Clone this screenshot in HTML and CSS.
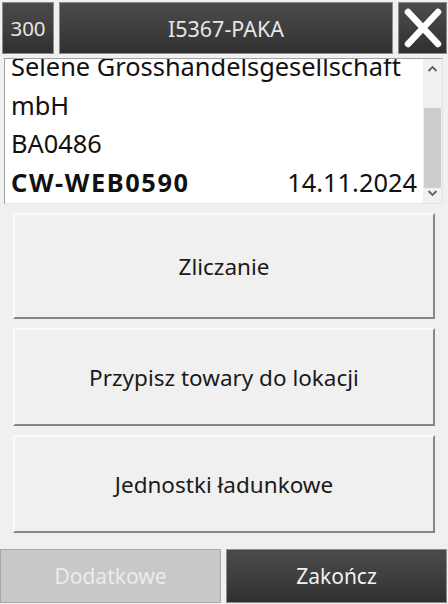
FILE: index.html
```html
<!DOCTYPE html>
<html lang="pl">
<head>
  <meta charset="UTF-8">
  <meta name="viewport" content="width=device-width, initial-scale=1.0">
  <title>I5367-PAKA</title>
  <link rel="stylesheet" href="styles.css">
</head>
<body>
  <div class="screen">
    <div class="top-bar">
      <div class="dark-box counter">300</div>
      <div class="dark-box title">I5367-PAKA</div>
      <button class="dark-box close-button" aria-label="Zamknij">
        <svg width="40" height="42" viewBox="0 0 40 42">
          <path d="M5 5 L35 37 M35 5 L5 37" stroke="#fff" stroke-width="6.5" stroke-linecap="round" fill="none"/>
        </svg>
      </button>
    </div>

    <div class="doc-list">
      <div class="doc-lines">
        <div class="doc-line">Selene Grosshandelsgesellschaft</div>
        <div class="doc-line">mbH</div>
        <div class="doc-line">BA0486</div>
        <div class="doc-line split">
          <strong>CW-WEB0590</strong>
          <span>14.11.2024</span>
        </div>
      </div>
      <div class="scrollbar">
        <svg class="arrow" width="19" height="18" viewBox="0 0 19 18">
          <path d="M5.5 12 L9.5 8 L13.5 12" stroke="#606060" stroke-width="1.8" fill="none"/>
        </svg>
        <div class="track"><div class="thumb"></div></div>
        <svg class="arrow" width="19" height="14" viewBox="0 0 19 14">
          <path d="M5.5 2 L9.5 6 L13.5 2" stroke="#606060" stroke-width="1.8" fill="none"/>
        </svg>
      </div>
    </div>

    <div class="actions">
      <button class="action-button tall">Zliczanie</button>
      <button class="action-button">Przypisz towary do lokacji</button>
      <button class="action-button">Jednostki ładunkowe</button>
    </div>

    <div class="bottom-bar">
      <button class="bottom-button disabled" disabled>Dodatkowe</button>
      <button class="bottom-button dark">Zakończ</button>
    </div>
  </div>
</body>
</html>
```

FILE: styles.css
```css
* {
  margin: 0;
  padding: 0;
  box-sizing: border-box;
}

body {
  font-family: 'Noto Sans', 'Open Sans', sans-serif;
  background: #f0f0f0;
  color: #111;
  width: 448px;
  height: 604px;
  overflow: hidden;
}

.screen {
  display: flex;
  flex-direction: column;
  height: 100%;
}

button {
  font-family: inherit;
  cursor: pointer;
}

/* top bar */
.top-bar {
  display: flex;
  gap: 5px;
  padding: 2px 1px 0 2px;
  height: 54px;
}

.dark-box {
  background: linear-gradient(#4b4b4b 0%, #3f3f3f 50%, #2f2f2f 100%);
  border: 1px solid #8c8c8c;
  color: #e6e6e6;
  font-size: 21.5px;
  display: flex;
  align-items: center;
  justify-content: center;
}

.counter {
  width: 52px;
  font-size: 20.5px;
}

.title {
  flex: 1;
}

.close-button {
  width: 49px;
  padding: 0;
}

/* document list */
.doc-list {
  display: flex;
  margin: 4px 5px 0 4px;
  height: 146px;
  background: #fff;
  border: 1px solid #a0a0a0;
  border-right-color: #e3e3e3;
  border-bottom-color: #e3e3e3;
  overflow: hidden;
}

.doc-lines {
  flex: 1;
  padding: 0 6px 0 6px;
  margin-top: -12px;
  font-size: 25.4px;
  line-height: 38.5px;
  color: #111;
}

.doc-line {
  white-space: nowrap;
}

.split {
  display: flex;
  justify-content: space-between;
}

.split strong {
  font-weight: 700;
  letter-spacing: 1.6px;
}

.scrollbar {
  width: 19px;
  background: #f0f0f0;
  display: flex;
  flex-direction: column;
}

.arrow {
  display: block;
  flex-shrink: 0;
}

.track {
  flex: 1;
  padding-top: 31px;
}

.thumb {
  height: 80px;
  margin: 0 1px;
  background: #cdcdcd;
}

/* action buttons */
.actions {
  display: flex;
  flex-direction: column;
  gap: 9px;
  padding: 9px 13px 0 13px;
}

.action-button {
  height: 98px;
  background: #f0f0f0;
  border: 2px solid;
  border-color: #fbfbfb #878787 #878787 #fbfbfb;
  font-size: 22.5px;
  color: #1a1a1a;
}

.action-button.tall {
  height: 106px;
}

/* bottom bar */
.bottom-bar {
  display: flex;
  gap: 5px;
  margin-top: auto;
  padding: 0 1px 1px 0;
  height: 55px;
}

.bottom-button {
  flex: 1;
  font-size: 21px;
  border: 1px solid #8c8c8c;
}

.bottom-button.disabled {
  background: #c8c8c8;
  border-color: #a8a8a8;
  color: #ececec;
  cursor: default;
}

.bottom-button.dark {
  background: linear-gradient(#4b4b4b 0%, #3f3f3f 50%, #2f2f2f 100%);
  color: #f0f0f0;
}
```
